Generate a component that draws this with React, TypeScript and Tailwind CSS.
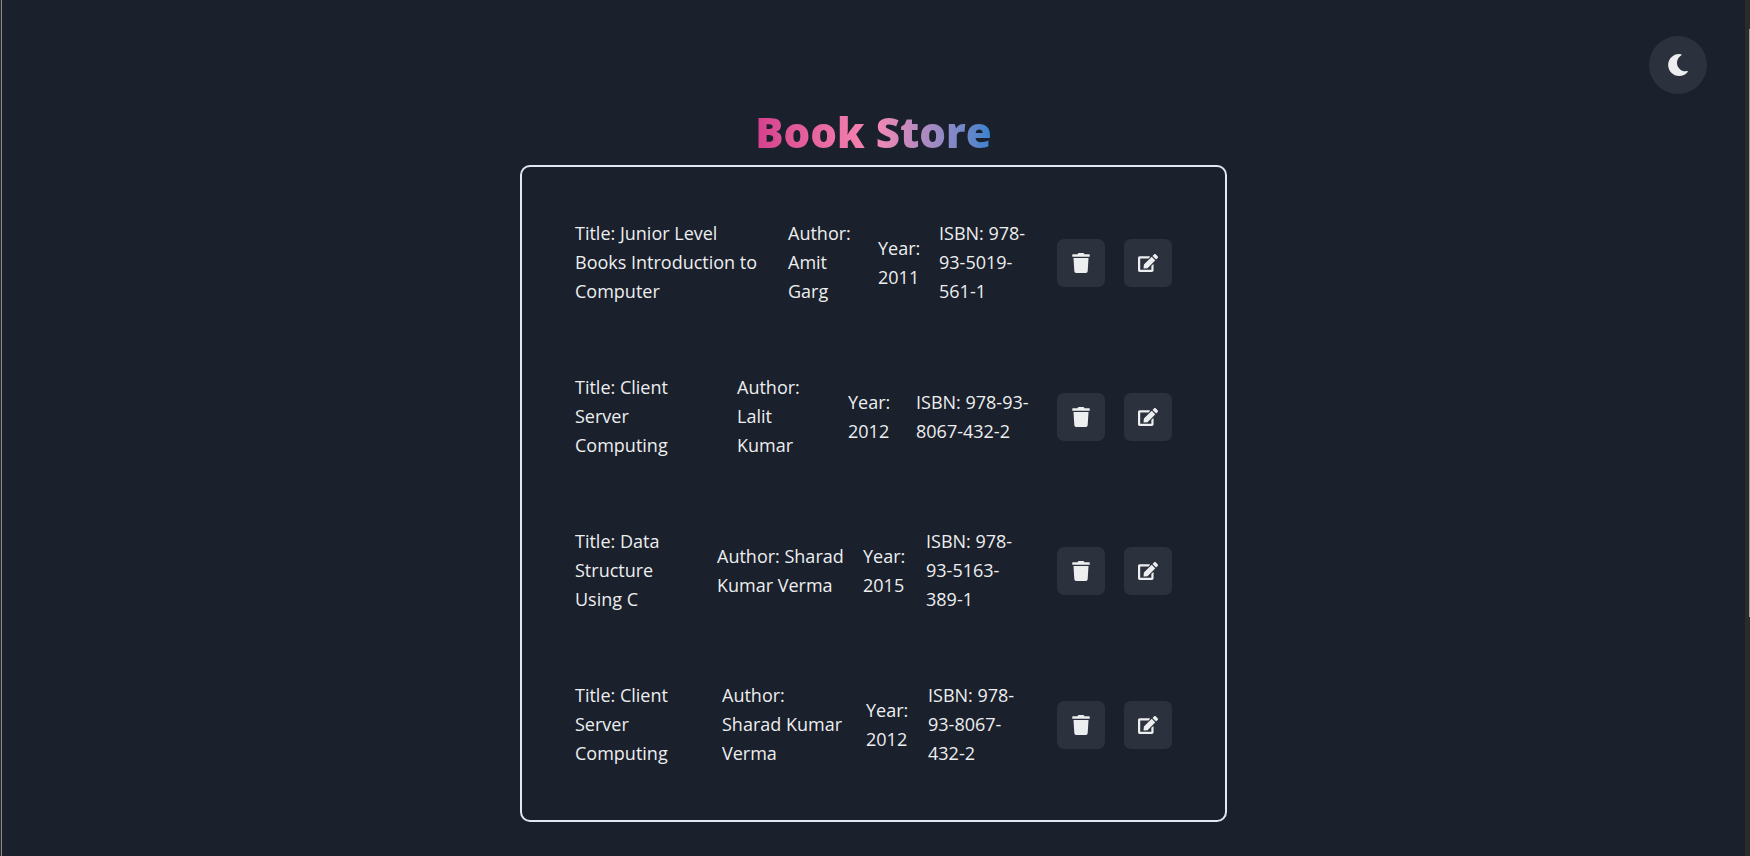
import React from "react";
import { FaTrash, FaEdit, FaMoon } from "react-icons/fa";

type Book = { title: string[]; author: string[]; year: string; isbn: string[]; columns: string };

const books: Book[] = [
  {
    title: ["Title: Junior Level", "Books Introduction to", "Computer"],
    author: ["Author:", "Amit", "Garg"],
    year: "2011",
    isbn: ["ISBN: 978-", "93-5019-", "561-1"],
    columns: "grid-cols-[213fr_90fr_61fr_118fr]",
  },
  {
    title: ["Title: Client", "Server", "Computing"],
    author: ["Author:", "Lalit", "Kumar"],
    year: "2012",
    isbn: ["ISBN: 978-93-", "8067-432-2"],
    columns: "grid-cols-[162fr_111fr_68fr_141fr]",
  },
  {
    title: ["Title: Data", "Structure", "Using C"],
    author: ["Author: Sharad", "Kumar Verma"],
    year: "2015",
    isbn: ["ISBN: 978-", "93-5163-", "389-1"],
    columns: "grid-cols-[142fr_146fr_63fr_131fr]",
  },
  {
    title: ["Title: Client", "Server", "Computing"],
    author: ["Author:", "Sharad Kumar", "Verma"],
    year: "2012",
    isbn: ["ISBN: 978-", "93-8067-", "432-2"],
    columns: "grid-cols-[147fr_144fr_62fr_129fr]",
  },
];

function Lines({ lines }: { lines: string[] }) {
  return (
    <p className="whitespace-nowrap">
      {lines.map((line) => (
        <span key={line} className="block">
          {line}
        </span>
      ))}
    </p>
  );
}

function IconButton({ label, children }: { label: string; children: React.ReactNode }) {
  return (
    <button
      type="button"
      aria-label={label}
      className="flex size-12 items-center justify-center rounded-[7px] bg-[#2c323d] text-[#edeeef]"
    >
      {children}
    </button>
  );
}

function BookRow({ book }: { book: Book }) {
  return (
    <li className="flex items-center">
      <div className={`grid flex-1 items-center ${book.columns}`}>
        <Lines lines={book.title} />
        <Lines lines={book.author} />
        <Lines lines={["Year:", book.year]} />
        <Lines lines={book.isbn} />
      </div>
      <div className="flex gap-[19px]">
        <IconButton label="Delete book">
          <FaTrash size={20} />
        </IconButton>
        <IconButton label="Edit book">
          <FaEdit size={20} />
        </IconButton>
      </div>
    </li>
  );
}

export default function App() {
  return (
    <div className="flex min-h-screen bg-[#1a202c] font-['Open_Sans','Noto_Sans',sans-serif] text-[18px] leading-[29px] text-[#edeeef]">
      <div className="w-0.5 border-r border-[#8a8a8a] bg-[#2b2b2b]" />
      <main className="flex flex-1 flex-col items-center pt-9 pr-[38px]">
        <button
          type="button"
          aria-label="Toggle colour mode"
          className="flex size-[58px] items-center justify-center self-end rounded-full bg-[#2c323d]"
        >
          <FaMoon size={22} />
        </button>
        <div className="flex w-full flex-col items-center pl-[38px]">
          <h1 className="mt-2 mb-1 bg-gradient-to-r from-[#d53f8c] via-[#f687b3] to-[#3182ce] bg-clip-text text-[42px] leading-[59px] font-extrabold text-transparent">
            Book Store
          </h1>
          <ul className="flex w-full max-w-[707px] flex-col gap-[67px] rounded-[10px] border-2 border-[#e2e8f0] px-[53px] py-[52px]">
            {books.map((book) => (
              <BookRow key={book.isbn.join("") + book.author.join("")} book={book} />
            ))}
          </ul>
        </div>
      </main>
      <div className="flex w-[5px] justify-end bg-[#2b2b2b] pt-[29px]">
        <div className="h-[588px] w-px bg-[#9f9f9f]" />
      </div>
    </div>
  );
}
